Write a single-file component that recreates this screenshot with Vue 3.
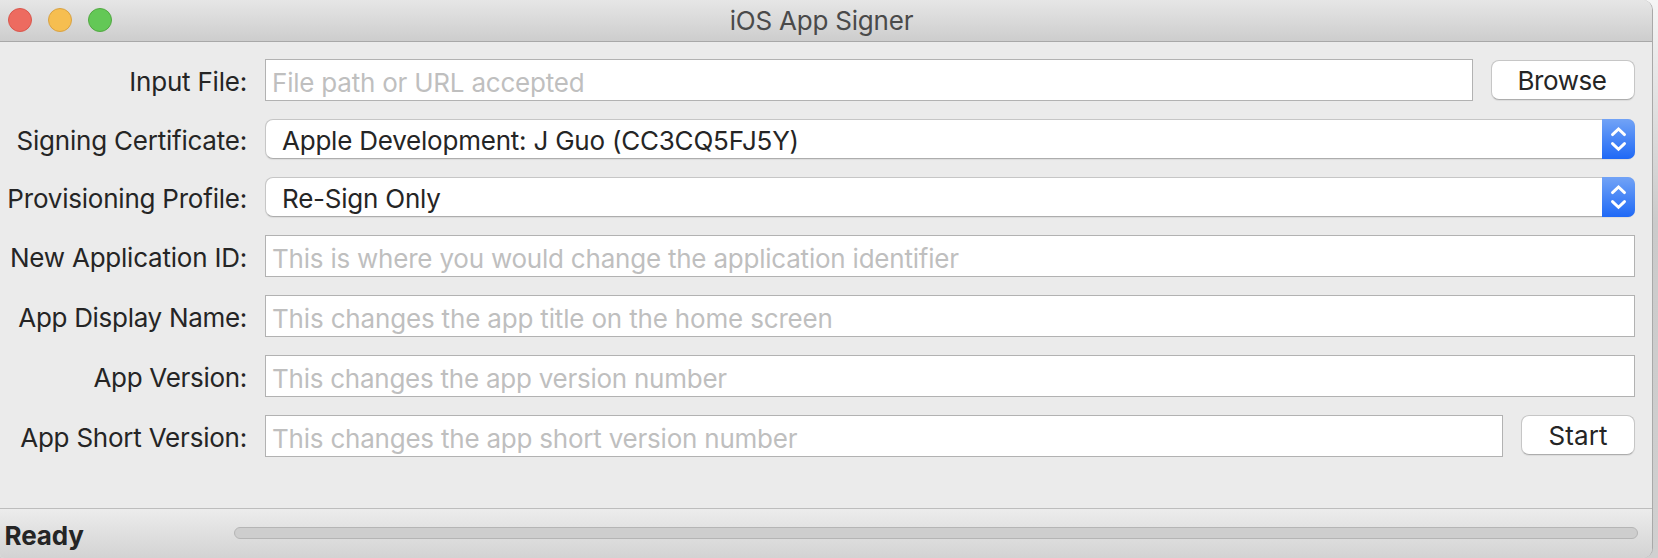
<script setup>
const rows = [
  { label: 'Input File:', kind: 'field', text: 'File path or URL accepted', button: 'Browse', id: 'input' },
  { label: 'Signing Certificate:', kind: 'select', text: 'Apple Development: J Guo (CC3CQ5FJ5Y)', id: 'certificate' },
  { label: 'Provisioning Profile:', kind: 'select', text: 'Re-Sign Only', id: 'profile' },
  { label: 'New Application ID:', kind: 'field', text: 'This is where you would change the application identifier', id: 'appid' },
  { label: 'App Display Name:', kind: 'field', text: 'This changes the app title on the home screen', id: 'name' },
  { label: 'App Version:', kind: 'field', text: 'This changes the app version number', id: 'version' },
  { label: 'App Short Version:', kind: 'field', text: 'This changes the app short version number', button: 'Start', id: 'short' },
]
</script>

<template>
  <main class="desktop">
    <section class="window">
      <header class="titlebar">
        <div class="lights"><i class="red"></i><i class="yellow"></i><i class="green"></i></div>
        <h1>iOS App Signer</h1>
      </header>
      <form class="form" @submit.prevent>
        <div v-for="r in rows" :key="r.id" class="row" :class="[r.kind, r.id]">
          <label>{{ r.label }}</label>
          <div class="control">
            <span>{{ r.text }}</span>
            <span v-if="r.kind === 'select'" class="stepper">
              <svg viewBox="0 0 33 40" width="33" height="40"><path d="M10.5 15.6 16.5 9.9l6 5.7M10.5 24.6l6 5.7 6-5.7" /></svg>
            </span>
          </div>
          <button v-if="r.button" type="button">{{ r.button }}</button>
        </div>
      </form>
      <footer><strong>Ready</strong><div class="progress"></div></footer>
    </section>
  </main>
</template>

<style>
body { margin: 0; overflow: hidden; }
</style>
<style scoped>
.desktop { height: 558px; background: linear-gradient(#f5f5f5, #cbcbcb 40%, #d0d0d0); font: 26px/30px Inter, "Liberation Sans", sans-serif; letter-spacing: -0.22px; color: #252525; }
.window { box-sizing: border-box; width: 1653px; height: 558px; display: flex; flex-direction: column; background: #ebebeb; border-right: 1px solid #a9a9a9; border-radius: 0 10px 10px 4px; overflow: hidden; }
.titlebar { box-sizing: border-box; height: 42px; display: grid; grid-template-columns: 1fr auto 1fr; border-bottom: 1px solid #a8a8a8; background: linear-gradient(#e6e6e6, #cdcdcd); padding-right: 9px; }
.lights { display: flex; gap: 16px; padding: 8px; }
.lights i { box-sizing: border-box; width: 24px; height: 24px; border-radius: 50%; border: 1px solid; }
.lights .red { background: #ed6b60; border-color: #d9574d; }
.lights .yellow { background: #f6be50; border-color: #d8a244; }
.lights .green { background: #63c856; border-color: #52a842; }
h1 { margin: 0; font: inherit; line-height: 41px; color: #4a4a4a; }
.form { flex: 1; padding: 17px 17px 0 0; display: flex; flex-direction: column; gap: 18px; }
.row { display: flex; height: 42px; }
.row.select { height: 40px; }
label { width: 247px; margin-right: 18px; white-space: nowrap; line-height: 46px; display: flex; justify-content: flex-end; }
.name label, .version label { letter-spacing: -0.3px; }
.select label { line-height: 44px; }
.control { box-sizing: border-box; flex: 1; background: #fff; border: 1px solid #b2b2b2; padding-left: 6px; line-height: 46px; color: #bfbfbf; white-space: nowrap; }
.name .control { letter-spacing: -0.17px; }
.version .control { letter-spacing: -0.25px; }
button { box-sizing: border-box; height: 40px; margin-left: 18px; width: 144px; padding: 1px 2px 0 0; border: 1px solid #c6c6c6; border-bottom-color: #adadad; border-radius: 8px; background: #fff; box-shadow: 0 1px 1px #0001; font: inherit; letter-spacing: -0.4px; color: #252525; }
.input button { margin-top: 1px; }
.short button { width: 114px; padding-right: 0; letter-spacing: 0.1px; }
.select .control { display: flex; color: #252525; line-height: 42px; border-color: #c6c6c6; border-bottom-color: #adadad; border-radius: 8px; box-shadow: 0 1px 1px #0001; padding-left: 16px; }
.stepper { margin: -1px -1px -1px auto; width: 33px; height: 40px; background: linear-gradient(#72a3f6, #1f69f6); border-radius: 0 7px 7px 0; }
svg { display: block; fill: none; stroke: #fff; stroke-width: 2.9; stroke-linecap: round; }
footer { box-sizing: border-box; height: 50px; border-top: 1px solid #bdbdbd; display: flex; background: linear-gradient(#ececec, #d3d3d3); }
strong { box-sizing: border-box; width: 234px; padding-left: 4.5px; line-height: 54px; letter-spacing: -0.1px; }
.progress { width: 1402px; height: 10px; margin-top: 18px; border: 1px solid #b5b5b5; border-radius: 6px; background: #cecece; }
</style>
